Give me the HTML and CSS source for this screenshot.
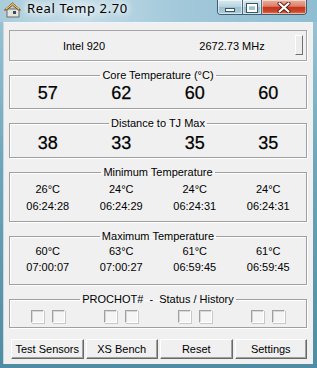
FILE: index.html
```html
<!DOCTYPE html>
<html lang="en">
<head>
<meta charset="UTF-8">
<title>Real Temp 2.70</title>
<link rel="stylesheet" href="styles.css">
</head>
<body>
<div class="window">
    <div class="titlebar">
        <svg class="app-icon" width="17" height="16" viewBox="0 0 17 16">
            <rect x="3" y="7" width="12" height="8" fill="#e4e4e0" stroke="#6d6d66"/>
            <rect x="9" y="9" width="3" height="3" fill="#3d4a52"/>
            <path d="M0.5 8 L8.5 1 L16.5 8 L14.5 8 L8.5 3.2 L2.5 8 Z" fill="#e2a33c" stroke="#7a4a14" stroke-linejoin="round"/>
            <path d="M2 7 L8.5 2 L15 7" fill="none" stroke="#f8d27a" stroke-width="1"/>
        </svg>
        <span class="title">Real Temp 2.70</span>
        <div class="caption-btns">
            <span class="cap cap-min"><i></i></span>
            <span class="cap cap-max"><i></i></span>
            <span class="cap cap-close">
                <svg width="14" height="11" viewBox="0 0 14 11">
                    <path d="M2.5 1.5 L11.5 9.5 M11.5 1.5 L2.5 9.5" stroke="#5a1e12" stroke-width="4" stroke-linecap="round"/>
                    <path d="M2.5 1.5 L11.5 9.5 M11.5 1.5 L2.5 9.5" stroke="#fff" stroke-width="2.2" stroke-linecap="round"/>
                </svg>
            </span>
        </div>
    </div>

    <div class="client">
        <div class="cpu-box">
            <span>Intel 920</span>
            <span>2672.73 MHz</span>
            <span class="thumb"></span>
        </div>

        <fieldset class="group group-core">
            <legend>Core Temperature (°C)</legend>
            <div class="cols big">
                <span>57</span><span>62</span><span>60</span><span>60</span>
            </div>
        </fieldset>

        <fieldset class="group group-dist">
            <legend>Distance to TJ Max</legend>
            <div class="cols big">
                <span>38</span><span>33</span><span>35</span><span>35</span>
            </div>
        </fieldset>

        <fieldset class="group group-min">
            <legend>Minimum Temperature</legend>
            <div class="cols small">
                <span>26°C</span><span>24°C</span><span>24°C</span><span>24°C</span>
            </div>
            <div class="cols small">
                <span>06:24:28</span><span>06:24:29</span><span>06:24:31</span><span>06:24:31</span>
            </div>
        </fieldset>

        <fieldset class="group group-max">
            <legend>Maximum Temperature</legend>
            <div class="cols small">
                <span>60°C</span><span>63°C</span><span>61°C</span><span>61°C</span>
            </div>
            <div class="cols small">
                <span>07:00:07</span><span>07:00:27</span><span>06:59:45</span><span>06:59:45</span>
            </div>
        </fieldset>

        <fieldset class="group group-prochot">
            <legend>PROCHOT# &nbsp;- &nbsp;Status / History</legend>
            <div class="cols checks">
                <span><i class="chk"></i><i class="chk"></i></span>
                <span><i class="chk"></i><i class="chk"></i></span>
                <span><i class="chk"></i><i class="chk"></i></span>
                <span><i class="chk"></i><i class="chk"></i></span>
            </div>
        </fieldset>

        <div class="buttons">
            <button>Test Sensors</button>
            <button>XS Bench</button>
            <button>Reset</button>
            <button>Settings</button>
        </div>
    </div>
</div>
</body>
</html>
```

FILE: styles.css
```css
html, body {
    margin: 0;
    height: 100%;
}
body {
    font-family: "Liberation Sans", Arial, sans-serif;
    font-size: 11px;
    color: #000;
    background: linear-gradient(to bottom, #aed0de 0, #98c2d4 22px, #6ea5ba 45%, #4f8ba2 100%);
    overflow: hidden;
}
.window {
    display: flex;
    flex-direction: column;
    height: 368px;
}

/* barre de titre */
.titlebar {
    height: 22px;
    display: flex;
    align-items: flex-start;
    background: linear-gradient(to right, #a9ccdb 0, #c4dde8 25%, #a3c9da 55%, #8fbdd1 100%);
}
.app-icon {
    margin: 2px 0 0 4px;
}
.title {
    margin: 0 0 0 6px;
    font-family: "Noto Sans", "Liberation Sans", sans-serif;
    font-size: 13px;
    letter-spacing: 0.6px;
    line-height: 17px;
    color: #000;
    text-shadow: 0 0 6px #fff, 0 0 10px #fff, 0 0 12px #fff;
}
.caption-btns {
    margin-left: auto;
    margin-right: 10px;
    display: flex;
    height: 14px;
    border: 1px solid #3f5f6f;
    border-top: none;
    border-radius: 0 0 4px 4px;
    overflow: hidden;
}
.cap {
    display: flex;
    align-items: center;
    justify-content: center;
    height: 14px;
    background: linear-gradient(to bottom, #d9eaf1 0, #b7d3df 50%, #9cc1d1 51%, #aacbd9 100%);
    box-shadow: inset 0 0 0 1px rgba(255,255,255,0.5);
}
.cap-min {
    width: 24px;
    border-right: 1px solid #4d6c7b;
    align-items: flex-end;
}
.cap-min i {
    display: block;
    width: 8px;
    height: 2px;
    margin-bottom: 2px;
    background: #fff;
    border: 1px solid #3a5563;
}
.cap-max {
    width: 18px;
    border-right: 1px solid #4d6c7b;
}
.cap-max i {
    display: block;
    width: 6px;
    height: 4px;
    border: 2px solid #fff;
    outline: 1px solid #3a5563;
    margin-top: 1px;
}
.cap-close {
    width: 44px;
    background: linear-gradient(to bottom, #eab0a0 0, #dc7f69 45%, #c7351a 52%, #c8442a 80%, #e07d5e 100%);
}

/* zone client */
.client {
    flex: 1;
    margin: 0 4px 4px 3px;
    background: #f0f0f0;
    border-top: 1px solid #eef5f8;
    border-left: 1px solid #c6d7de;
    padding: 7px 6px 5px 5px;
}
.cpu-box {
    position: relative;
    height: 29px;
    display: grid;
    grid-template-columns: 1fr 1fr;
    align-items: center;
    text-align: center;
    border: 1px solid #a5a5a5;
    box-shadow: 1px 1px 0 #fff;
}
.thumb {
    position: absolute;
    right: 3px;
    top: 4px;
    width: 6px;
    height: 18px;
    background: #ececec;
    border: 1px solid;
    border-color: #fff #6f6f6f #6f6f6f #fff;
}

/* groupes */
.group {
    margin: 8px 0 0;
    padding: 0 1px 4px;
    border: 1px solid #a0a0a0;
    box-shadow: inset 1px 1px 0 #fff, 1px 1px 0 #fff;
    min-inline-size: auto;
}
.group legend {
    margin: 0 auto;
    padding: 0 2px;
    line-height: 13px;
}
.cols {
    display: grid;
    grid-template-columns: repeat(4, 1fr);
    text-align: center;
}
.big {
    font-size: 18px;
    -webkit-text-stroke: 0.25px #000;
    line-height: 22px;
}
.group-dist {
    padding-top: 2px;
    padding-bottom: 3px;
}
.group-min {
    padding-top: 2px;
    padding-bottom: 6px;
}
.group-min .small {
    line-height: 17px;
}
.group-max {
    padding-bottom: 9px;
}
.group-max .small {
    line-height: 16px;
}
.group-prochot {
    padding-top: 4px;
    padding-bottom: 4px;
}
.checks span {
    display: flex;
    justify-content: center;
    gap: 8px;
}
.chk {
    display: block;
    width: 11px;
    height: 11px;
    background: #f5f5f5;
    border: 1px solid;
    border-color: #a0a0a0 #fff #fff #a0a0a0;
    box-shadow: inset 1px 1px 0 #d8d8d8, 1px 1px 0 #c8c8c8;
}

/* boutons */
.buttons {
    margin: 11px 0 0 2px;
    display: grid;
    grid-template-columns: repeat(4, 1fr);
    gap: 2px;
}
.buttons button {
    height: 20px;
    padding: 0;
    font-family: "Liberation Sans", Arial, sans-serif;
    font-size: 11px;
    color: #000;
    background: #f0f0f0;
    border: 1px solid;
    border-color: #fff #696969 #696969 #fff;
    box-shadow: inset -1px -1px 0 #a0a0a0;
    border-radius: 0;
}
```
